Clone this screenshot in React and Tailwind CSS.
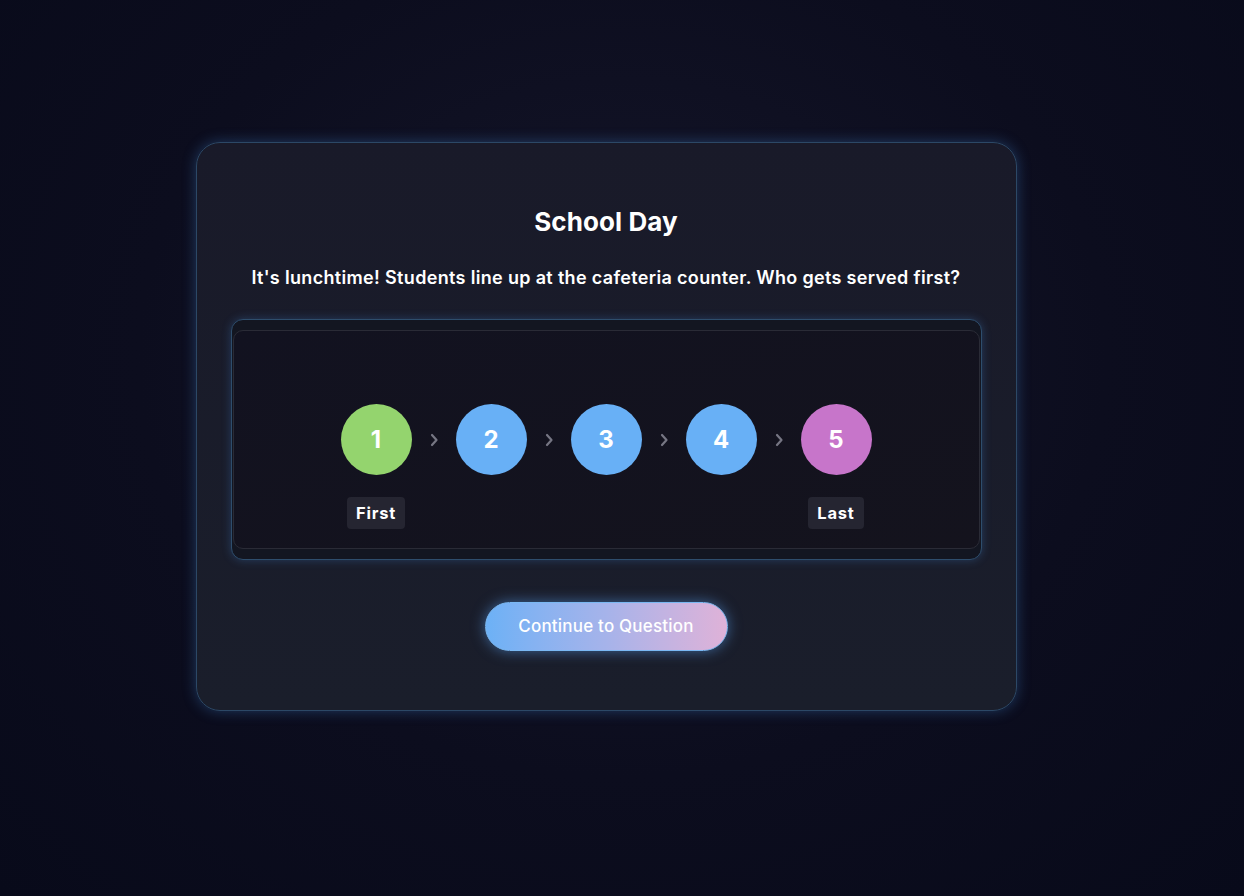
import React from 'react';

const steps = [
    { n: 1, color: 'bg-[#94d46e]', label: 'First' },
    { n: 2, color: 'bg-[#68b0f6]' },
    { n: 3, color: 'bg-[#68b0f6]' },
    { n: 4, color: 'bg-[#68b0f6]' },
    { n: 5, color: 'bg-[#c775ca]', label: 'Last' },
];

const Chevron = () => (
    <svg width="12" height="16" viewBox="0 0 12 16" className="text-[#767683]">
        <path d="M4 3 L8.5 8 L4 13" fill="none" stroke="currentColor" strokeWidth="2.2" strokeLinecap="round" strokeLinejoin="round" />
    </svg>
);

const App = () => {
    return (
        <div
            className="min-h-[896px] w-full flex justify-center items-start pt-[142px] pr-[32px] bg-[radial-gradient(ellipse_at_50%_40%,#15162a_0%,#0c0d1e_55%,#080a1a_100%)]"
            style={{ fontFamily: 'Inter, "Noto Sans", sans-serif' }}
        >
            {/* Card */}
            <div className="w-[821px] rounded-[24px] border border-[#2c4866] bg-gradient-to-b from-[#191a29] to-[#1a1e2b] shadow-[0_0_14px_rgba(70,140,220,0.35)] px-[34px] pt-[63px] pb-[59px] flex flex-col items-center">
                <h2 className="text-[26px] leading-[32px] font-bold text-white tracking-[0.1px]">School Day</h2>
                <p className="mt-[26px] text-[18px] leading-[28px] font-semibold text-white tracking-[0.33px]">
                    It's lunchtime! Students line up at the cafeteria counter. Who gets served first?
                </p>

                {/* Sequence frame */}
                <div className="mt-[27px] w-full rounded-[12px] border border-[#2e4d6c] bg-[#131621] shadow-[0_0_10px_rgba(70,140,220,0.3)] px-[1px] pt-[10px] pb-[10px]">
                    <div className="rounded-[10px] border border-[#2a2b36] bg-gradient-to-br from-[#121220] to-[#14131d] pt-[73px] pb-[19px] flex flex-col items-center">
                        <div className="flex items-center gap-[16px]">
                            {steps.map((s, i) => (
                                <React.Fragment key={s.n}>
                                    {i > 0 && <Chevron />}
                                    <div className={`w-[71px] h-[71px] rounded-full ${s.color} flex items-center justify-center text-white text-[24px] font-bold`}>
                                        {s.n}
                                    </div>
                                </React.Fragment>
                            ))}
                        </div>
                        <div className="mt-[22px] flex items-center gap-[16px]">
                            {steps.map((s, i) => (
                                <React.Fragment key={s.n}>
                                    {i > 0 && <div className="w-[12px]" />}
                                    <div className="w-[71px] flex justify-center">
                                        {s.label ? (
                                            <span className="h-[32px] px-[9px] rounded-[4px] bg-[#252531] text-white text-[16.5px] font-bold flex items-center tracking-[0.8px]">
                                                {s.label}
                                            </span>
                                        ) : (
                                            <span className="h-[32px]" />
                                        )}
                                    </div>
                                </React.Fragment>
                            ))}
                        </div>
                    </div>
                </div>

                <button className="mt-[42px] w-[243px] h-[49px] rounded-full border border-[#7ab8f2] bg-gradient-to-r from-[#6cb1f6] via-[#a6b3ea] to-[#dfb2d8] text-white text-[17px] font-medium tracking-[0.2px] shadow-[0_0_14px_rgba(90,160,240,0.55)]">
                    Continue to Question
                </button>
            </div>
        </div>
    );
};

export default App;
